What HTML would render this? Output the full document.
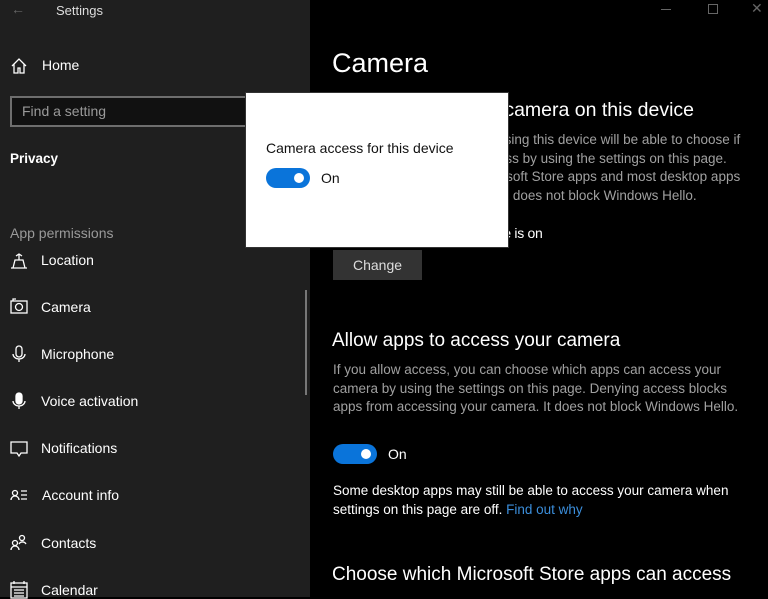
<!DOCTYPE html>
<html><head><meta charset="utf-8"><style>
*{margin:0;padding:0;box-sizing:border-box}
body{width:768px;height:597px;overflow:hidden;background:#000;font-family:"Liberation Sans",sans-serif;color:#fff;position:relative}
.side{position:absolute;left:0;top:0;width:310px;height:597px;background:#1f1f1f}
.a{position:absolute;white-space:nowrap}
.nav{font-size:14px;color:#fff}
.ic{position:absolute;left:10px;width:18px;height:18px}
.body{font-size:13.5px;color:#a0a0a0;line-height:18.5px}
.tog{position:absolute;width:44px;height:20px;border-radius:10px;background:#0a74da}
.tog::after{content:"";position:absolute;right:6px;top:5px;width:10px;height:10px;border-radius:50%;background:#fff}
</style></head><body>
<div class="side"></div>
<div class="a" style="left:11px;top:1px;font-size:14px;color:#666">←</div>
<div class="a" style="left:56px;top:3px;font-size:13px;color:#ddd">Settings</div>
<svg class="ic" style="top:57px" viewBox="0 0 18 18" fill="none" stroke="#fff" stroke-width="1.3"><path d="M2 9L9 2l7 7M4 7v9h4v-5h2v5h4V7"/></svg>
<div class="a nav" style="left:42px;top:57px">Home</div>
<div class="a" style="left:10px;top:96px;width:240px;height:31px;border:2px solid #6e6e6e;background:#111"></div>
<div class="a" style="left:22px;top:103px;font-size:14px;color:#9a9a9a">Find a setting</div>
<div class="a" style="left:10px;top:151px;font-size:13.5px;font-weight:bold">Privacy</div>
<div class="a" style="left:10px;top:225px;font-size:14px;color:#9a9a9a">App permissions</div>
<svg class="ic" style="top:252px" viewBox="0 0 18 18" fill="none" stroke="#fff" stroke-width="1.3"><path d="M1 16h16M3 16l2-8h8l2 8M9 8V2M6 4l3-2 3 2"/></svg>
<div class="a nav" style="left:41px;top:252px">Location</div>
<svg class="ic" style="top:298px" viewBox="0 0 18 18" fill="none" stroke="#fff" stroke-width="1.3"><rect x="1" y="3" width="16" height="12"/><circle cx="9" cy="9" r="3.5"/><path d="M3 3V1h3"/></svg>
<div class="a nav" style="left:41px;top:299px">Camera</div>
<svg class="ic" style="top:345px" viewBox="0 0 18 18" fill="none" stroke="#fff" stroke-width="1.3"><rect x="6" y="1" width="6" height="11" rx="3"/><path d="M3 9a6 5 0 0012 0M9 14v3"/></svg>
<div class="a nav" style="left:41px;top:346px">Microphone</div>
<svg class="ic" style="top:392px" viewBox="0 0 18 18" fill="#fff" stroke="#fff" stroke-width="1.3"><rect x="6" y="1" width="6" height="11" rx="3"/><path fill="none" d="M3 9a6 5 0 0012 0M9 14v3"/></svg>
<div class="a nav" style="left:41px;top:393px">Voice activation</div>
<svg class="ic" style="top:440px" viewBox="0 0 18 18" fill="none" stroke="#fff" stroke-width="1.3"><path d="M1 2h16v11H11l-2 3-2-3H1z"/></svg>
<div class="a nav" style="left:41px;top:440px">Notifications</div>
<svg class="ic" style="top:487px" viewBox="0 0 18 18" fill="none" stroke="#fff" stroke-width="1.3"><circle cx="5" cy="6" r="2.5"/><path d="M1 13a4 4 0 018 0M11 4h6M11 8h6M11 12h6"/></svg>
<div class="a nav" style="left:42px;top:487px">Account info</div>
<svg class="ic" style="top:534px" viewBox="0 0 18 18" fill="none" stroke="#fff" stroke-width="1.3"><circle cx="5" cy="9" r="2.5"/><path d="M1 16a4 4 0 018 0"/><circle cx="12" cy="4" r="2.5"/><path d="M9 10a4 4 0 017 0"/></svg>
<div class="a nav" style="left:41px;top:535px">Contacts</div>
<svg class="ic" style="top:581px" viewBox="0 0 18 18" fill="none" stroke="#fff" stroke-width="1.3"><rect x="1" y="2" width="16" height="15"/><path d="M1 6h16M4 0v3M14 0v3M4 9h10M4 12h10M4 15h10"/></svg>
<div class="a nav" style="left:41px;top:582px">Calendar</div>
<div class="a" style="left:305px;top:290px;width:2px;height:105px;background:#777"></div>

<div class="a" style="left:661px;top:9px;width:10px;height:1px;background:#666"></div>
<div class="a" style="left:708px;top:4px;width:10px;height:10px;border:1px solid #666"></div>
<div class="a" style="left:751px;top:0px;font-size:14px;color:#666">✕</div>

<div class="a" style="left:332px;top:48px;font-size:27px">Camera</div>
<div class="a" style="left:332px;top:99px;font-size:19.5px">Allow access to the camera on this device</div>
<div class="a body" style="left:332px;top:131px">If you allow access, people using this device will be able to choose if<br>their apps have camera access by using the settings on this page.<br>Denying access blocks Microsoft Store apps and most desktop apps<br>from accessing the camera. It does not block Windows Hello.</div>
<div class="a" style="left:332px;top:225px;font-size:14px;letter-spacing:-0.3px">Camera access for this device is on</div>
<div class="a" style="left:333px;top:250px;width:89px;height:30px;background:#333;font-size:14px;text-align:center;line-height:30px;color:#ddd">Change</div>

<div class="a" style="left:332px;top:330px;font-size:19px">Allow apps to access your camera</div>
<div class="a body" style="left:333px;top:361px">If you allow access, you can choose which apps can access your<br>camera by using the settings on this page. Denying access blocks<br>apps from accessing your camera. It does not block Windows Hello.</div>
<div class="tog" style="left:333px;top:444px"></div>
<div class="a" style="left:388px;top:446px;font-size:14px">On</div>
<div class="a" style="left:333px;top:482px;font-size:13.5px;line-height:18.5px;color:#fff">Some desktop apps may still be able to access your camera when<br>settings on this page are off. <span style="color:#3b8edb">Find out why</span></div>
<div class="a" style="left:332px;top:564px;font-size:19px">Choose which Microsoft Store apps can access</div>

<div class="a" style="left:245px;top:92px;width:264px;height:156px;background:#fff;border:1px solid #333"></div>
<div class="a" style="left:266px;top:140px;font-size:14px;color:#111">Camera access for this device</div>
<div class="tog" style="left:266px;top:168px"></div>
<div class="a" style="left:321px;top:170px;font-size:14px;color:#111">On</div>
</body></html>
